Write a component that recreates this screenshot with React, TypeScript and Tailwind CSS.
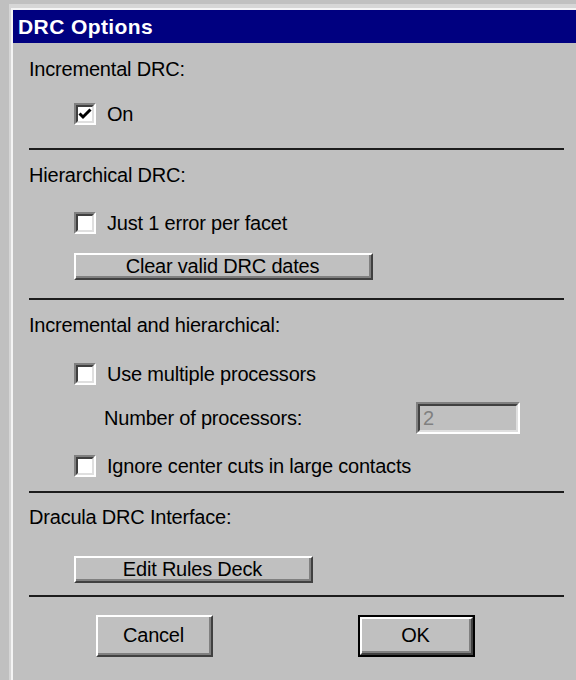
import React from "react";

function Checkbox({ checked }: { checked?: boolean }) {
  return (
    <div className="w-[22px] h-[22px] shrink-0 border-2 border-t-[#808080] border-l-[#808080] border-r-white border-b-white">
      <div className="w-full h-full border-2 border-t-[#404040] border-l-[#404040] border-r-[#dfdfdf] border-b-[#dfdfdf] bg-white flex items-center justify-center">
        {checked && (
          <svg width="14" height="14" viewBox="0 0 14 14">
            <polyline points="1.5,6.5 5,10 12.5,2.5" fill="none" stroke="#000" strokeWidth="3" />
          </svg>
        )}
      </div>
    </div>
  );
}

function CheckRow({ label, checked }: { label: string; checked?: boolean }) {
  return (
    <div className="flex items-center h-[22px] ml-[45px] gap-[11px]">
      <Checkbox checked={checked} />
      <span className="leading-[24px]">{label}</span>
    </div>
  );
}

function Button({ label, className = "", isDefault }: { label: string; className?: string; isDefault?: boolean }) {
  const face = (
    <div className="h-full border-2 border-t-white border-l-white border-r-[#404040] border-b-[#404040]">
      <div className="h-full border-r-2 border-b-2 border-[#808080] flex items-center justify-center leading-[20px]">
        {label}
      </div>
    </div>
  );
  if (isDefault) {
    return <div className={`border-2 border-black ${className}`}>{face}</div>;
  }
  return <div className={className}>{face}</div>;
}

function Separator({ className = "" }: { className?: string }) {
  return <div className={`h-[2px] w-[535px] bg-[#1c1c1c] ${className}`} />;
}

export default function App() {
  return (
    <div className="w-[576px] h-[680px] overflow-hidden bg-[#c0c0c0] pt-[4px] pl-[9px] font-[family-name:Liberation_Sans,Arial,sans-serif] text-[20px] tracking-[-0.2px] text-black">
      <div className="h-full border-l-2 border-t-4 border-[#d6d6d6]">
        <div className="h-full border-l-2 border-t-2 border-[#f4f4f4] flex flex-col">
          {/* Title bar */}
          <div className="h-[33px] shrink-0 bg-[#000080] flex items-center pl-[5px]">
            <span className="text-white font-bold text-[21px] tracking-[0.4px] leading-[24px]">DRC Options</span>
          </div>

          {/* Body */}
          <div className="flex-1 bg-[#c0c0c0] pl-[16px] pt-[14px] flex flex-col">
            <div className="leading-[24px] h-[24px]">Incremental DRC:</div>
            <div className="mt-[22px]">
              <CheckRow label="On" checked />
            </div>

            <Separator className="mt-[23px]" />

            <div className="mt-[13px] leading-[24px] h-[24px]">Hierarchical DRC:</div>
            <div className="mt-[25px]">
              <CheckRow label="Just 1 error per facet" />
            </div>
            <Button label="Clear valid DRC dates" className="mt-[19px] ml-[45px] w-[299px] h-[27px]" />

            <Separator className="mt-[18px]" />

            <div className="mt-[13px] leading-[24px] h-[24px]">Incremental and hierarchical:</div>
            <div className="mt-[26px]">
              <CheckRow label="Use multiple processors" />
            </div>
            <div className="mt-[17px] ml-[75px] flex items-center h-[32px]">
              <span className="w-[312px] leading-[24px]">Number of processors:</span>
              <div className="w-[104px] h-[32px] border-2 border-t-[#808080] border-l-[#808080] border-r-white border-b-white">
                <div className="h-full border-2 border-t-[#404040] border-l-[#404040] border-r-[#dfdfdf] border-b-[#dfdfdf] bg-[#c0c0c0] flex items-center pl-[3px] text-[#808080] leading-[20px]">
                  2
                </div>
              </div>
            </div>
            <div className="mt-[21px]">
              <CheckRow label="Ignore center cuts in large contacts" />
            </div>

            <Separator className="mt-[14px]" />

            <div className="mt-[12px] leading-[24px] h-[24px]">Dracula DRC Interface:</div>
            <Button label="Edit Rules Deck" className="mt-[27px] ml-[45px] w-[239px] h-[27px]" />

            <Separator className="mt-[12px]" />

            <div className="mt-[18px] flex h-[42px]">
              <Button label="Cancel" className="ml-[67px] w-[117px] h-[42px]" />
              <Button label="OK" isDefault className="ml-[145px] w-[117px] h-[42px]" />
            </div>
          </div>
        </div>
      </div>
    </div>
  );
}
